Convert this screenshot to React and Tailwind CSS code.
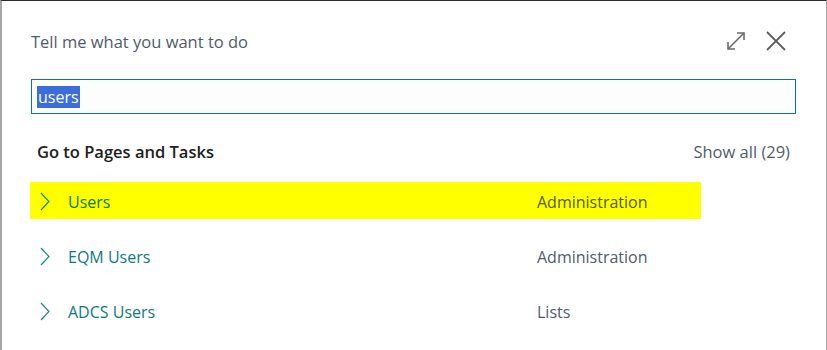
const rows = [
    { name: 'Users', group: 'Administration', hit: true },
    { name: 'EQM Users', group: 'Administration' },
    { name: 'ADCS Users', group: 'Lists' },
]

function ExpandIcon() {
    return (
        <svg width="20" height="20" viewBox="0 0 20 20" fill="none" stroke="#6b6b6b" strokeWidth="1.6">
            <path d="M2 18 L18 2" />
            <path d="M11 2 H18 V9" />
            <path d="M2 11 V18 H9" />
        </svg>
    )
}

function CloseIcon() {
    return (
        <svg width="20" height="20" viewBox="0 0 20 20" fill="none" stroke="#5f5f5f" strokeWidth="1.8">
            <path d="M1 1 L19 19 M19 1 L1 19" />
        </svg>
    )
}

function Chevron({ color }) {
    return (
        <svg width="10" height="19" viewBox="0 0 10 19" fill="none" stroke={color} strokeWidth="1.2">
            <path d="M1 1 L9 9.5 L1 18" />
        </svg>
    )
}

export default function App() {
    return (
        <div className="w-[827px] h-[350px] bg-white overflow-hidden font-['Open_Sans',sans-serif] border-t border-[#2a2a2a] border-l-2 border-l-[#a6a6a6] border-r border-r-[#a6a6a6] flex flex-col">
            {/* Header */}
            <div className="flex items-center justify-between pl-[29px] pr-[40px] pt-[22px] h-[60px]">
                <span className="text-[16.5px] text-[#505c6d]">Tell me what you want to do</span>
                <div className="flex items-center gap-[20px] -mt-[3px]">
                    <ExpandIcon />
                    <CloseIcon />
                </div>
            </div>

            {/* Search box */}
            <div className="pl-[29px] pr-[30px] pt-[18px]">
                <div className="h-[35px] border border-[#0f7b80] bg-[#fdfdfd] flex items-center pl-[5px]">
                    <span className="bg-[#3b6ddc] text-white text-[16px] leading-[22px] px-[1px]">users</span>
                </div>
            </div>

            {/* Section header */}
            <div className="flex items-center justify-between pl-[35px] pr-[36px] mt-[26px] h-[24px]">
                <span className="text-[16.5px] font-semibold text-[#212121]">Go to Pages and Tasks</span>
                <span className="text-[16.5px] text-[#505c6d]">Show all (29)</span>
            </div>

            {/* Results */}
            <div className="flex flex-col mt-[18px] pl-[28px]">
                {rows.map((r) => (
                    <div
                        key={r.name}
                        className={`flex items-center w-[671px] h-[37px] mb-[18px] ${r.hit ? 'bg-[#ffff00]' : ''}`}
                    >
                        <div className="ml-[10px] mt-[1px] flex">
                            <Chevron color={r.hit ? '#1c8a10' : '#1a8a8f'} />
                        </div>
                        <span className={`ml-[18px] w-[469px] pt-[2px] text-[16px] ${r.hit ? 'text-[#0b7b0b]' : 'text-[#0e7a80]'}`}>
                            {r.name}
                        </span>
                        <span className={`pt-[2px] text-[16px] ${r.hit ? 'text-[#525c00]' : 'text-[#505c6d]'}`}>
                            {r.group}
                        </span>
                    </div>
                ))}
            </div>
        </div>
    )
}
